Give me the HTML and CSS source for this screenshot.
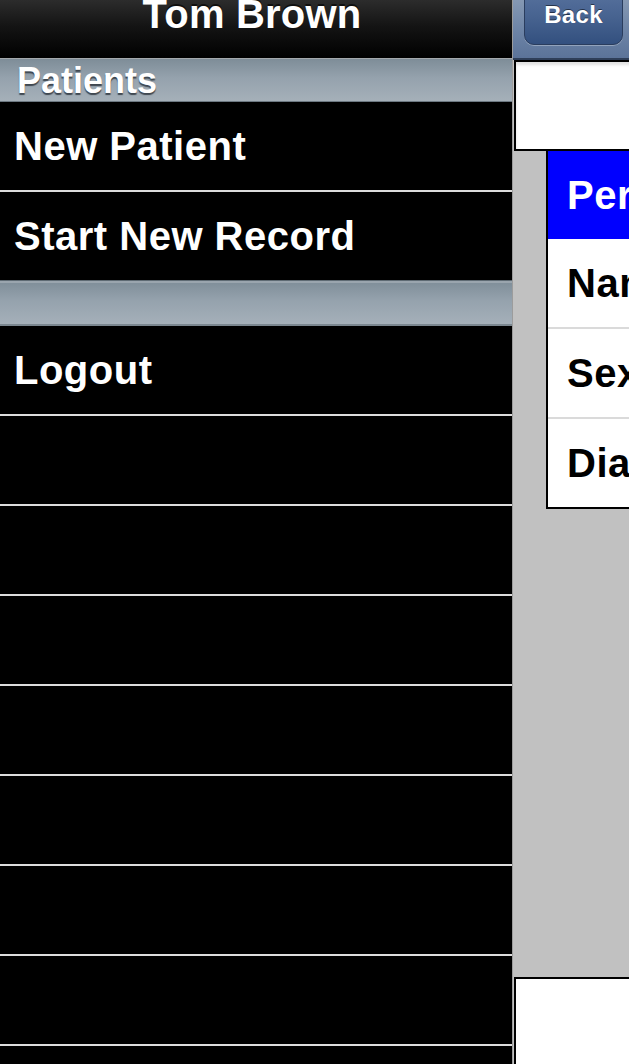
FILE: index.html
```html
<!DOCTYPE html>
<html>
<head>
<meta charset="utf-8">
<title>Tom Brown</title>
<link rel="stylesheet" href="styles.css">
</head>
<body>
<div class="app">
  <div class="menu">
    <div class="menu-nav"><span class="menu-title">Tom Brown</span></div>
    <div class="section first"><span>Patients</span></div>
    <div class="row">New Patient</div>
    <div class="row last">Start New Record</div>
    <div class="section second"></div>
    <div class="row">Logout</div>
    <div class="row"></div>
    <div class="row"></div>
    <div class="row"></div>
    <div class="row"></div>
    <div class="row"></div>
    <div class="row"></div>
    <div class="row"></div>
    <div class="row"></div>
  </div>
  <div class="detail">
    <div class="detail-nav">
      <div class="back-btn">Back</div>
    </div>
    <div class="white-box"></div>
    <div class="table">
      <div class="cell head">Personal Details</div>
      <div class="cell">Name</div>
      <div class="cell">Sex</div>
      <div class="cell end">Diagnosis</div>
    </div>
    <div class="spacer"></div>
    <div class="bottom-box"></div>
  </div>
</div>
</body>
</html>
```

FILE: styles.css
```css
html, body {
  margin: 0;
  padding: 0;
}
body {
  width: 629px;
  height: 1064px;
  overflow: hidden;
  background: #c1c1c1;
  font-family: "Liberation Sans", Arial, Helvetica, sans-serif;
  font-weight: bold;
}
.app {
  display: flex;
  height: 1064px;
}
.menu {
  width: 512px;
  flex: none;
  background: #000;
  display: flex;
  flex-direction: column;
  overflow: hidden;
}
.menu-nav {
  height: 58px;
  flex: none;
  background: linear-gradient(#2c2c2c 0%, #141414 45%, #000 100%);
  border-bottom: 1px solid #a3a8ac;
  display: flex;
  justify-content: center;
  align-items: flex-start;
  overflow: hidden;
}
.menu-title {
  color: #fff;
  font-size: 40px;
  line-height: 40px;
  margin-top: -6px;
  margin-right: 8px;
  letter-spacing: 0.2px;
  text-shadow: 0 -2px 0 rgba(0,0,0,0.6);
}
.section {
  flex: none;
  background: linear-gradient(#7e8d98 0%, #95a2ad 45%, #a5b0b9 100%);
  display: flex;
  align-items: center;
  padding-left: 17px;
  color: #fff;
  font-size: 36px;
  text-shadow: 0 2px 1px rgba(40,48,56,0.8);
}
.section.first {
  height: 42px;
  border-bottom: 1px solid #6d7982;
}
.section.first span {
  margin-top: 2px;
}
.section.second {
  height: 43px;
  border-top: 1px solid #5e6a73;
  border-bottom: 2px solid #7b8790;
  box-shadow: inset 0 2px 0 #9aa5ae;
}
.row {
  flex: none;
  height: 88px;
  border-bottom: 2px solid #dcdcdc;
  color: #fff;
  font-size: 40px;
  letter-spacing: 0.5px;
  display: flex;
  align-items: center;
  padding-left: 14px;
}
.row.last {
  border-bottom: none;
}
.detail {
  flex: 1;
  display: flex;
  flex-direction: column;
  overflow: hidden;
  border-left: 1px solid #9c9c9c;
}
.detail-nav {
  height: 58px;
  flex: none;
  background: linear-gradient(#8598b3 0%, #6e85a7 50%, #5b7399 100%);
  border-bottom: 2px solid #2e3e58;
  display: flex;
  align-items: flex-start;
  padding-left: 11px;
}
.back-btn {
  width: 99px;
  height: 59px;
  margin-top: -14px;
  flex: none;
  border: 1px solid #2a3d5e;
  border-radius: 10px;
  background: linear-gradient(#5a74a0 0%, #46628f 55%, #33507f 100%);
  box-shadow: 0 1px 0 rgba(255,255,255,0.3);
  color: #fff;
  font-size: 24px;
  letter-spacing: 0.3px;
  display: flex;
  justify-content: center;
  align-items: flex-end;
  padding-bottom: 15px;
  box-sizing: border-box;
  text-shadow: 0 -1px 0 rgba(0,0,0,0.5);
}
.white-box {
  width: 300px;
  height: 87px;
  flex: none;
  margin-left: 1px;
  background: #fff;
  border: 2px solid #000;
  border-right: none;
  box-shadow: inset 0 3px 3px rgba(0,0,0,0.12);
}
.table {
  width: 300px;
  flex: none;
  margin-left: 33px;
  background: #fff;
  border-left: 2px solid #000;
  border-bottom: 2px solid #000;
}
.cell {
  height: 88px;
  border-bottom: 2px solid #dadada;
  display: flex;
  align-items: center;
  padding-left: 19px;
  font-size: 40px;
  letter-spacing: 0.5px;
  color: #000;
  white-space: nowrap;
}
.cell.head {
  background: #0000ff;
  color: #fff;
  border-bottom: none;
}
.cell.end {
  border-bottom: none;
}
.spacer {
  flex: 1;
}
.bottom-box {
  width: 300px;
  height: 85px;
  flex: none;
  margin-left: 1px;
  background: #fff;
  border-top: 2px solid #000;
  border-left: 2px solid #000;
}
```
